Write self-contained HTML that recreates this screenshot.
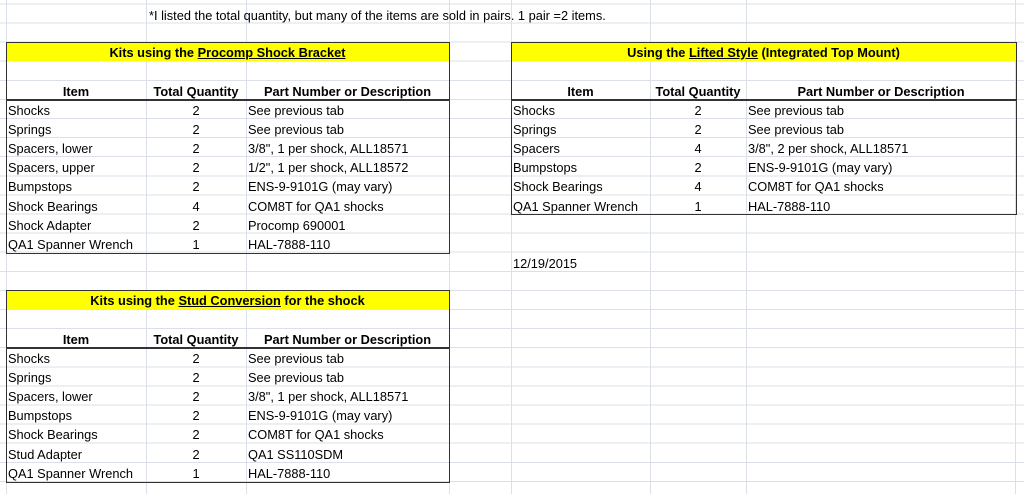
<!DOCTYPE html>
<html><head><meta charset="utf-8"><style>
html,body{margin:0;padding:0}
body{width:1024px;height:494px;position:relative;overflow:hidden;background:#fff;font-family:"Liberation Sans",Arial,sans-serif;font-size:12.8px;color:#000}
.grid{position:absolute;left:0;top:0;width:1024px;height:494px;background:repeating-linear-gradient(to bottom,transparent 0,transparent 3.4px,#dadfe8 3.4px,#dadfe8 4.4px,transparent 4.4px,transparent 19.1px)}
.v{position:absolute;top:0;height:494px;width:1px;background:#dadfe8}
.y{position:absolute;background:#ffff00}
.box{position:absolute;border:1px solid #333;box-sizing:border-box}
.h{position:absolute;height:1px;background:#333}
.t{position:absolute;height:19px;line-height:24px;white-space:nowrap}
.l{padding-left:2px;box-sizing:border-box}
.c{text-align:center}
.b{font-weight:bold}
u{text-decoration:underline}
</style></head><body>
<div class="grid"></div>
<div class="v" style="left:6px"></div><div class="v" style="left:146px"></div><div class="v" style="left:246px"></div><div class="v" style="left:449px"></div><div class="v" style="left:511px"></div><div class="v" style="left:650px"></div><div class="v" style="left:746px"></div><div class="v" style="left:1015px"></div>

<div class="t" style="left:149px;top:4px">*I listed the total quantity, but many of the items are sold in pairs. 1 pair =2 items.</div>

<!-- table 1 -->
<div class="y" style="left:6px;top:42px;width:443px;height:19px"></div>
<div class="box" style="left:6px;top:42px;width:444px;height:212px"></div>
<div class="h" style="left:6px;top:99px;width:444px;height:2px"></div>
<div class="t c b" style="left:6px;top:41px;width:443px">Kits using the <u>Procomp Shock Bracket</u></div>
<div class="t c b" style="left:6px;top:80px;width:140px">Item</div>
<div class="t c b" style="left:146px;top:80px;width:100px">Total Quantity</div>
<div class="t c b" style="left:246px;top:80px;width:203px">Part Number or Description</div>
<div class="t l" style="left:6px;top:99px">Shocks</div><div class="t c" style="left:146px;width:100px;top:99px">2</div><div class="t l" style="left:246px;top:99px">See previous tab</div>
<div class="t l" style="left:6px;top:118px">Springs</div><div class="t c" style="left:146px;width:100px;top:118px">2</div><div class="t l" style="left:246px;top:118px">See previous tab</div>
<div class="t l" style="left:6px;top:137px">Spacers, lower</div><div class="t c" style="left:146px;width:100px;top:137px">2</div><div class="t l" style="left:246px;top:137px">3/8", 1 per shock, ALL18571</div>
<div class="t l" style="left:6px;top:156px">Spacers, upper</div><div class="t c" style="left:146px;width:100px;top:156px">2</div><div class="t l" style="left:246px;top:156px">1/2", 1 per shock, ALL18572</div>
<div class="t l" style="left:6px;top:175px">Bumpstops</div><div class="t c" style="left:146px;width:100px;top:175px">2</div><div class="t l" style="left:246px;top:175px">ENS-9-9101G (may vary)</div>
<div class="t l" style="left:6px;top:195px">Shock Bearings</div><div class="t c" style="left:146px;width:100px;top:195px">4</div><div class="t l" style="left:246px;top:195px">COM8T for QA1 shocks</div>
<div class="t l" style="left:6px;top:214px">Shock Adapter</div><div class="t c" style="left:146px;width:100px;top:214px">2</div><div class="t l" style="left:246px;top:214px">Procomp 690001</div>
<div class="t l" style="left:6px;top:233px">QA1 Spanner Wrench</div><div class="t c" style="left:146px;width:100px;top:233px">1</div><div class="t l" style="left:246px;top:233px">HAL-7888-110</div>

<!-- table 2 -->
<div class="y" style="left:511px;top:42px;width:505px;height:19px"></div>
<div class="box" style="left:511px;top:42px;width:506px;height:173px"></div>
<div class="h" style="left:511px;top:99px;width:506px;height:2px"></div>
<div class="t c b" style="left:511px;top:41px;width:505px">Using the <u>Lifted Style</u> (Integrated Top Mount)</div>
<div class="t c b" style="left:511px;top:80px;width:139px">Item</div>
<div class="t c b" style="left:650px;top:80px;width:96px">Total Quantity</div>
<div class="t c b" style="left:746px;top:80px;width:270px">Part Number or Description</div>
<div class="t l" style="left:511px;top:99px">Shocks</div><div class="t c" style="left:650px;width:96px;top:99px">2</div><div class="t l" style="left:746px;top:99px">See previous tab</div>
<div class="t l" style="left:511px;top:118px">Springs</div><div class="t c" style="left:650px;width:96px;top:118px">2</div><div class="t l" style="left:746px;top:118px">See previous tab</div>
<div class="t l" style="left:511px;top:137px">Spacers</div><div class="t c" style="left:650px;width:96px;top:137px">4</div><div class="t l" style="left:746px;top:137px">3/8", 2 per shock, ALL18571</div>
<div class="t l" style="left:511px;top:156px">Bumpstops</div><div class="t c" style="left:650px;width:96px;top:156px">2</div><div class="t l" style="left:746px;top:156px">ENS-9-9101G (may vary)</div>
<div class="t l" style="left:511px;top:175px">Shock Bearings</div><div class="t c" style="left:650px;width:96px;top:175px">4</div><div class="t l" style="left:746px;top:175px">COM8T for QA1 shocks</div>
<div class="t l" style="left:511px;top:195px">QA1 Spanner Wrench</div><div class="t c" style="left:650px;width:96px;top:195px">1</div><div class="t l" style="left:746px;top:195px">HAL-7888-110</div>
<div class="t l" style="left:511px;top:252px">12/19/2015</div>

<!-- table 3 -->
<div class="y" style="left:6px;top:291px;width:443px;height:19px"></div>
<div class="box" style="left:6px;top:290px;width:444px;height:193px"></div>
<div class="h" style="left:6px;top:347px;width:444px;height:2px"></div>
<div class="t c b" style="left:6px;top:289px;width:443px">Kits using the <u>Stud Conversion</u> for the shock</div>
<div class="t c b" style="left:6px;top:328px;width:140px">Item</div>
<div class="t c b" style="left:146px;top:328px;width:100px">Total Quantity</div>
<div class="t c b" style="left:246px;top:328px;width:203px">Part Number or Description</div>
<div class="t l" style="left:6px;top:347px">Shocks</div><div class="t c" style="left:146px;width:100px;top:347px">2</div><div class="t l" style="left:246px;top:347px">See previous tab</div>
<div class="t l" style="left:6px;top:366px">Springs</div><div class="t c" style="left:146px;width:100px;top:366px">2</div><div class="t l" style="left:246px;top:366px">See previous tab</div>
<div class="t l" style="left:6px;top:385px">Spacers, lower</div><div class="t c" style="left:146px;width:100px;top:385px">2</div><div class="t l" style="left:246px;top:385px">3/8", 1 per shock, ALL18571</div>
<div class="t l" style="left:6px;top:404px">Bumpstops</div><div class="t c" style="left:146px;width:100px;top:404px">2</div><div class="t l" style="left:246px;top:404px">ENS-9-9101G (may vary)</div>
<div class="t l" style="left:6px;top:423px">Shock Bearings</div><div class="t c" style="left:146px;width:100px;top:423px">2</div><div class="t l" style="left:246px;top:423px">COM8T for QA1 shocks</div>
<div class="t l" style="left:6px;top:443px">Stud Adapter</div><div class="t c" style="left:146px;width:100px;top:443px">2</div><div class="t l" style="left:246px;top:443px">QA1 SS110SDM</div>
<div class="t l" style="left:6px;top:462px">QA1 Spanner Wrench</div><div class="t c" style="left:146px;width:100px;top:462px">1</div><div class="t l" style="left:246px;top:462px">HAL-7888-110</div>
</body></html>
